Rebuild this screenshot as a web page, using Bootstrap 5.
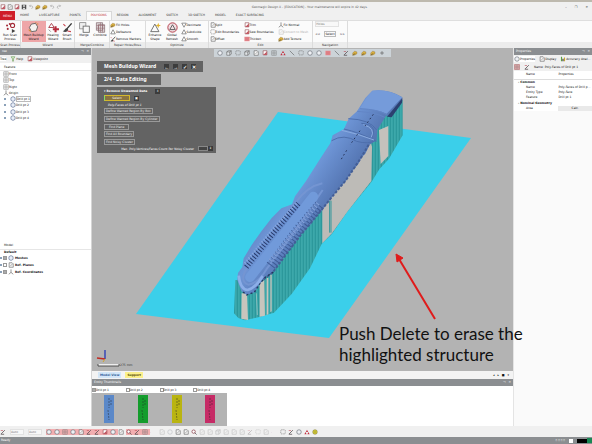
<!DOCTYPE html>
<html lang="en">
<head>
<meta charset="utf-8">
<meta name="viewport" content="width=device-width, initial-scale=1">
<title>Geomagic Design X</title>
<link href="https://cdn.jsdelivr.net/npm/bootstrap@5.3.0/dist/css/bootstrap.min.css" rel="stylesheet">
<style>
body{font-family:"DejaVu Sans",sans-serif;font-size:3px;line-height:4px;color:#111;background:#f0f0f0;height:100vh;min-height:400px;overflow:hidden}
button,input,select{font:inherit;color:inherit;padding:0;border:0;background:none;margin:0;border-radius:0}
a{color:inherit;text-decoration:none}
p,h1,h2,h3{margin:0;font-size:inherit;line-height:inherit}
svg{display:block;flex:none}
.ic{width:6px;height:6px}
.ic-lg{width:11px;height:11px}
.title-row{height:11px;border-top:2px solid #bdb9ae}
.title-row h1{font-weight:400;color:#555}
.side-start{flex:8 1 0}
.side-end{flex:7 1 0}
.quick-bar{gap:1px}
.menu-row{height:9px}
.menu-row a{color:#333}
.menu-btn{width:15px;height:9px;background:#cf1d28;color:#fff!important}
.menu-tabs a{padding:0 5px;height:9px;line-height:9px}
.menu-tabs a.current{background:#fbfbfb;border:1px solid #d8d8d8;border-bottom:0;color:#c2323a;line-height:7px;padding:0 4px}
.ribbon{height:28px;background:#fbfbfb;border-top:1px solid #dedede}
.rgroup{border-right:1px solid #dcdcdc}
.rgroup h2{height:6px;line-height:6px;background:#ececec;font-weight:400;text-align:center;color:#333;white-space:nowrap}
.rbig{height:21px;padding-top:1px;white-space:nowrap}
.rbig.on{background:#eea6a8}
.rsmall{height:6px;white-space:nowrap}
.panel-head{height:7px;line-height:7px;background:#8b8e91;color:#fff;padding:0 2px}
.left-pane{width:92px;background:#fff;border-right:1px solid #d5d5d5}
.above-model{flex:4 1 0}
.below-model{flex:5 1 0}
.right-pane{width:79px;background:#fafafa;border-left:1px solid #e4e4e4}
.ptabs{height:8px;background:#f0f0f0;overflow:hidden;white-space:nowrap}
.ptabs .current{background:#fff}
.feature-head{height:8px;border-bottom:1px solid #e6e6e6;padding-left:4px}
.tree-a{height:50px}
.tree-b{height:25px}
.tree-b .line{gap:1px}
.expander{width:2px;height:2px;background:#8aa0b8}
.boxed{border:1px solid #bbb;line-height:4px}
.stage{background:#b3b3b3;min-height:0}
.scene{position:absolute;left:0;top:0;width:421px;height:323px}
.view-tools{position:absolute;left:122px;top:1px;height:8px;background:#ccd3d8;padding:0 3px}
.wizard{position:absolute;left:5px;top:13px;width:119px;color:#fff}
.wiz-bar{background:#636363;height:11px;font-family:"Noto Sans","Open Sans",sans-serif;font-size:5px;line-height:11px;font-weight:700;color:#fff;padding-left:7px}
.wiz-wide{width:106px}
.wiz-short{width:64px;margin:2px 0}
.wiz-body{background:#636363;height:66px;padding:1px 3px}
.wiz-body button{border:1px solid #999;line-height:4px;padding:0 1px;color:#eee}
.wiz-body .pick{width:26px;border-color:#d4b72c;background:#8a7340;color:#fff;border-left-color:#7ee06a}
.wiz-body input{width:10px;height:5px;background:#444;border:1px solid #888}
.mini{width:5px;height:5px;background:#3c3c3c;color:#fff;line-height:4px;text-align:center}
.note{position:absolute;left:247px;top:275px;z-index:2;font-family:Lato,"Open Sans",sans-serif;font-size:17px;line-height:21px;color:#111;white-space:nowrap}
.view-tabs{height:8px;background:#f3f3f3;padding-left:6px}
.view-tabs a{height:6px;line-height:6px;padding:0 2px;font-weight:700}
.t-model{background:#d3e6f8;color:#2d5b96}
.t-support{background:#fbf08c;color:#554b00}
.thumbs{height:40px;background:#fff}
.thumb-list{width:135px}
.thumb-list label{height:7px;white-space:nowrap}
.thumb-list input,.cbox{appearance:none;width:4px;height:4px;border:1px solid #999;background:#fff;flex:none}
.thumb-list input:checked,.cbox:checked{background:#aaa}
.thumb-pic{background:#b3b3b3;height:33px;padding:2px 0 0 12px}
.bottom-tools{height:11px;background:#f0f0f0}
.bottom-tools select,.nav-pick{appearance:none;background:#f8f8f8;color:#777;border:1px solid #e2e2e2}
.bottom-tools select{width:14px}
.hot{background:#f2aeb0}
.dim{opacity:.35}
.status{height:7px;line-height:7px;background:#8b8e91;color:#fff;padding-left:1px}
.props{width:100%;height:40px;table-layout:fixed;color:#111;white-space:nowrap}
.props th,.props td{padding:0;height:5px;line-height:5px;overflow:hidden}
.props thead th{height:8px;border-bottom:1px solid #ddd;font-weight:400}
.props .ind{padding-left:12px;font-weight:400}
.calc{width:100%;background:#e9e9e9;line-height:5px}
</style>
<script src="https://cdn.jsdelivr.net/npm/bootstrap@5.3.0/dist/js/bootstrap.bundle.min.js"></script>
</head>
<body class="d-flex flex-column">
<svg width="0" height="0" class="position-absolute" aria-hidden="true"><defs>
<symbol id="ball" viewBox="0 0 16 16"><circle cx="8" cy="8" r="6" fill="#eef0f4" stroke="#60656e" stroke-width="1.6"/></symbol>
<symbol id="gem" viewBox="0 0 16 16"><path d="M8 1.500 13.500 4.500v7L8 14.500 2.500 11.500v-7Z" fill="#e8edf7" stroke="#5b6e93" stroke-width="1.700"/></symbol>
<symbol id="mesh" viewBox="0 0 16 16"><path d="M5 3 11 2l3 5-2 6-7 1-3-6Z" fill="#f5f2f0" stroke="#555" stroke-width="1.200"/><path d="M1 11l3 3M11 1l1-1M13 3h2" stroke="#d58a35" stroke-width="1.500"/></symbol>
<symbol id="scan" viewBox="0 0 16 16"><g fill="#a32b38"><circle cx="3" cy="5" r="1.500"/><circle cx="7" cy="3" r="1.500"/><circle cx="4" cy="10" r="1.500"/></g><circle cx="11" cy="5" r="3" fill="none" stroke="#a32b38" stroke-width="1.500"/><path d="M10 10l5 3-5 3Z" fill="#444"/></symbol>
<symbol id="heal" viewBox="0 0 16 16"><path d="M5 2 9 8H1Z" fill="none" stroke="#a83a46" stroke-width="1.300"/><path d="M11 6v9M7 10.500h9" stroke="#b52c3c" stroke-width="3"/><path d="M1 11l3 3" stroke="#666"/></symbol>
<symbol id="brush" viewBox="0 0 16 16"><path d="M14 2 7 10" stroke="#333" stroke-width="2"/><path d="M7 9c-3 0-3 4-6 4 3 3 8 1 8-2Z" fill="#444"/><path d="M2 3l3 3M8 13l5 1" stroke="#c8434e" stroke-width="1.500"/></symbol>
<symbol id="merge" viewBox="0 0 16 16"><rect x="1" y="1" width="9" height="9" fill="#eee" stroke="#777"/><rect x="6" y="6" width="9" height="9" fill="#f8f8f8" stroke="#666" stroke-width="1.200"/></symbol>
<symbol id="combine" viewBox="0 0 16 16"><path d="M2 1v11h9V1ZM5 4v11h9V4Z" fill="#dcd5d7" stroke="#80666c"/><path d="M5 4v8M8 1v14M11 4v11M2 5h12M2 9h12" stroke="#966a72" stroke-width=".8"/></symbol>
<symbol id="tri" viewBox="0 0 16 16"><path d="M8 2 14 13H2Z" fill="none" stroke="#555" stroke-width="1.600"/></symbol>
<symbol id="tridown" viewBox="0 0 16 16"><path d="M8 14 14 3H2Z" fill="none" stroke="#555" stroke-width="1.600"/></symbol>
<symbol id="funnel" viewBox="0 0 16 16"><path d="M3 2h10l-4 6v6H7V8Z" fill="#dff0d4" stroke="#5f9648" stroke-width="1.500"/></symbol>
<symbol id="shape" viewBox="0 0 16 16"><path d="M7 3 13 14H1Z" fill="none" stroke="#666" stroke-width="1.300"/><path d="m12 1 1 3 3 1-3 1-1 3-1-3-3-1 3-1Z" fill="#e2b32e"/></symbol>
<symbol id="remesh" viewBox="0 0 16 16"><circle cx="8" cy="8" r="6.800" fill="#f2dfe2" stroke="#b33e4c" stroke-width="1.400"/><path d="M8 4 12 11H4Z" fill="none" stroke="#555" stroke-width="1.300"/></symbol>
<symbol id="gold" viewBox="0 0 16 16"><path d="M2 14V8l5-5 6 2v5l-5 3Z" fill="#dcb13c" stroke="#87662a"/><path d="m3 14 5-5" stroke="#444" stroke-width="2"/></symbol>
<symbol id="page" viewBox="0 0 16 16"><path d="M3 2h8l3 3v9H3Z" fill="#f7f7f7" stroke="#555" stroke-width="1.500"/><path d="m6 11 6-6" stroke="#777" stroke-width="1.500"/></symbol>
<symbol id="cut" viewBox="0 0 16 16"><path d="M3 2h10v11H3Z" fill="#fff" stroke="#8a3941" stroke-width="1.500"/><path d="M3 13 13 4v9Z" fill="#c05862"/></symbol>
<symbol id="grid" viewBox="0 0 16 16"><path d="M2 2h12v12H2ZM8 2v12M2 8h12" fill="none" stroke="#777" stroke-width="1.300"/></symbol>
<symbol id="axis" viewBox="0 0 16 16"><path d="M8 1v8L2 14M8 9l6 5" fill="none" stroke="#555" stroke-width="1.600"/></symbol>
<symbol id="cube" viewBox="0 0 16 16"><path d="M2 5h8v9H2ZM2 5l4-3h8l-4 3M14 2v9l-4 3" fill="#e2e5e8" stroke="#555" stroke-width="1.400"/></symbol>
<symbol id="select" viewBox="0 0 16 16"><rect x="2" y="2" width="12" height="11" rx="2" fill="none" stroke="#666" stroke-width="1.400" stroke-dasharray="3 1.500"/></symbol>
<symbol id="line" viewBox="0 0 16 16"><path d="M2 2 14 14" stroke="#555" stroke-width="1.500"/></symbol>
<symbol id="redtri" viewBox="0 0 16 16"><path d="M8 2 11 8H5ZM4 8 7 14H1ZM12 8l3 6H9Z" fill="#c33242"/></symbol>
<symbol id="pen" viewBox="0 0 16 16"><path d="M3 13 13 3M2 14h9" stroke="#51484b" stroke-width="2"/><path d="M2 4h6" stroke="#b54450" stroke-width="1.500"/></symbol>
<symbol id="redbox" viewBox="0 0 16 16"><rect x="1" y="2" width="14" height="12" fill="#e78d92"/><path d="M3 5h10M3 8h10M3 11h10" stroke="#c65b64"/></symbol>
<symbol id="lens" viewBox="0 0 16 16"><circle cx="7" cy="7" r="4.500" fill="#fff" stroke="#8e444d" stroke-width="2"/><path d="m10 10 5 5" stroke="#555" stroke-width="2"/></symbol>
<symbol id="sun" viewBox="0 0 16 16"><circle cx="8" cy="8" r="6" fill="#e3dd3d" stroke="#776f25" stroke-width="1.500"/><path d="M8 4v8M4 8h8" stroke="#776f25"/></symbol>
<symbol id="save" viewBox="0 0 16 16"><path d="M2 2h12v12H2Z" fill="#444"/><path d="M5 3h6v4H5ZM5 10h6v4H5Z" fill="#ddd"/></symbol>
<symbol id="undo" viewBox="0 0 16 16"><path d="M4 5h5c5 0 5 7 0 7M7 2 4 5l3 3" fill="none" stroke="#999" stroke-width="1.500"/></symbol>
<symbol id="redo" viewBox="0 0 16 16"><path d="M12 5H7c-5 0-5 7 0 7M9 2l3 3-3 3" fill="none" stroke="#999" stroke-width="1.500"/></symbol>
<symbol id="plus" viewBox="0 0 16 16"><path d="M8 3v10M3 8h10" stroke="#555" stroke-width="1.600"/></symbol>
<symbol id="bars" viewBox="0 0 16 16"><path d="M4 2v12" stroke="#5ca044" stroke-width="3"/><path d="M8 7v7" stroke="#333" stroke-width="3"/><path d="M12 4v10" stroke="#c6a52e" stroke-width="3"/></symbol>
</defs></svg>

<header>
  <div class="title-row d-flex align-items-center">
    <div class="side-start quick-bar d-flex align-items-center" id="quick" data-icons="cut page cut save undo gold gold undo redo"></div>
    <h1>Geomagic Design X - [EDUCATION] - Your maintenance will expire in 42 days.</h1>
    <div class="side-end d-flex justify-content-end gap-2 pe-1"><button aria-label="Minimize">–</button><button aria-label="Restore">❐</button><button aria-label="Close">✕</button></div>
  </div>
  <nav class="menu-row d-flex">
    <a href="#" class="menu-btn d-flex align-items-center justify-content-center">MENU</a>
    <div class="menu-tabs d-flex" id="menus"></div>
  </nav>
  <div class="ribbon d-flex" id="ribbon"></div>
</header>

<main class="d-flex flex-fill" style="min-height:0">
  <aside class="left-pane d-flex flex-column flex-shrink-0">
    <div class="panel-head d-flex justify-content-between"><span>ree</span><span>⊣ &nbsp; ✕</span></div>
    <div class="ptabs d-flex align-items-center gap-1">
      <a href="#" class="current d-flex align-items-center">Tree</a>
      <a href="#" class="d-flex align-items-center"><svg class="ic"><use href="#funnel"/></svg>Help</a>
      <a href="#" class="d-flex align-items-center"><svg class="ic"><use href="#cut"/></svg>Viewpoint</a>
    </div>
    <div class="feature-head d-flex align-items-center">Feature</div>
    <div class="tree-a d-flex flex-column" id="features"></div>
    <div class="above-model"></div>
    <div class="feature-head d-flex align-items-center">Model</div>
    <div class="tree-b d-flex flex-column fw-bold" id="models"></div>
    <div class="below-model"></div>
  </aside>

  <section class="d-flex flex-column flex-fill" style="min-width:0">
    <div class="stage position-relative flex-fill">
      <svg class="scene" viewBox="92 48 421 323" role="img" aria-label="Scanned part on a support plane">
        <defs>
          <pattern id="ribs" width="9" height="20" patternUnits="userSpaceOnUse"><path d="M0 0h9v20H0Z" fill="#35a3a6"/><path d="M1 0v20" stroke="#1e878c" stroke-width="1.500"/><path d="M5 0v20" stroke="#4fb5b5" stroke-width="1"/></pattern>
          <linearGradient id="skin" x1="200" y1="260" x2="360" y2="370" gradientUnits="userSpaceOnUse"><stop offset="0" stop-color="#5778b5"/><stop offset=".5" stop-color="#6e95d6"/><stop offset="1" stop-color="#5576b3"/></linearGradient>
        </defs>
        <path d="M278 112 471 138 329 338 136 314Z" fill="#3bcfea"/>
        <g transform="translate(210 80) scale(.3333)">
          <path d="M76 600 72 700 85 714 105 721 148 711 192 698 245 642 300 565 335 492 366 462 412 395 485 305 508 268 537 236 578 166 578 60 520 100 335 380 150 600Z" fill="url(#ribs)"/>
          <path d="M337 385 363 350 480 180 486 200 484 303 412 395 366 460 337 490Z" fill="#bdbbb7"/>
          <path d="M359 362v96M363 362v96" stroke="#35989b" stroke-width="3"/>
          <path d="M507 150 535 138 535 228 512 252Z" fill="#c4c1bc"/>
          <path d="M95 640h16l3 80-20-4ZM149 610l14-10 2 107-16 3ZM170 595l5-2v110l-5 2ZM181 585l4-3v112l-4 3Z" fill="#c8c5bd"/>
          <path d="M139 640l3 65" stroke="#8ac0be" stroke-width="3"/>
          <path d="M487 32Q535 26 577 52L577 62 543 108 528 107 502 150 500 180 479 194 466 221 455 232 445 252 425 275 406 305 387 325 355 366 335 393 321 407 300 436 273 463 252 492 230 521 208 550 187 578 165 592 149 613 134 637 110 645 94 633 82 600 84 579 97 561 101 535 125 495 153 455 185 414 214 385 246 373 255 349 288 303 332 234 361 190 368 166 402 147 416 116 441 94 466 54Z" fill="url(#skin)"/>
          <path d="M487 32Q535 26 577 52L530 101Q500 88 450 85L470 52Z" fill="#759bda"/>
          <path d="M577 55 576 68 545 112 531 110 541 98Z" fill="#2c3f70"/>
          <path d="M450 86Q505 88 530 104M441 94Q500 98 524 112" fill="none" stroke="#6286c6" stroke-width="3"/>
          <path d="M415 116Q480 118 500 150M402 147Q445 156 500 184M365 182Q402 160 440 184 474 194 499 181M454 130Q508 134 483 178" fill="none" stroke="#4d6eac" stroke-width="3"/>
          <path d="M395 151Q440 160 492 180M460 134Q498 145 484 172" fill="none" stroke="#8bace0" stroke-width="3"/>
          <path d="M490 103 465 138M450 152 420 195M410 211 393 239" fill="none" stroke="#27355b" stroke-width="3" stroke-dasharray="5 8"/>
          <path d="M337 310Q290 320 255 370 170 480 113 560 85 604 115 614 145 610 170 567 260 450 338 330" fill="none" stroke="#7495d2" stroke-width="6"/>
          <path d="M310 350Q200 490 120 592" fill="none" stroke="#719ada" stroke-width="29" stroke-linecap="round"/>
          <path d="M265 371 192 457 106 565" fill="none" stroke="#273b6d" stroke-width="16" stroke-dasharray="3 6"/>
          <path d="M260 371 185 451 103 552" fill="none" stroke="#8ba9df" stroke-width="7" stroke-dasharray="3 6"/>
          <path d="M328 375 266 448 181 559" fill="none" stroke="#3e5b95" stroke-width="31" stroke-dasharray="3 7"/>
          <path d="M324 370 250 460 178 546" fill="none" stroke="#7f9ed7" stroke-width="13" stroke-dasharray="4 6"/>
          <path d="M476 194 452 235 409 299 356 363 323 404 273 464 230 521 188 578 152 604" fill="none" stroke="#435e96" stroke-width="6" stroke-dasharray="8 5"/>
          <path d="M190 576 166 592 150 610 133 637 110 645 94 632" fill="none" stroke="#23365f" stroke-width="4" stroke-dasharray="6 7"/>
          <path d="M86 587Q91 629 113 630 139 622 158 588" fill="none" stroke="#8caee8" stroke-width="8"/>
        </g>
        <path d="M435 319 399 259" stroke="#e01b1b" stroke-width="2"/><path d="M396 254 397 262 403 258Z" fill="#e01b1b" stroke="#e01b1b"/>
        <path d="M105 359v-9" stroke="#2638b8" stroke-width="1.300"/><path d="M105 359 97 358" stroke="#c22a22" stroke-width="1.300"/><path d="M105 359l-2 3" stroke="#d1a52b"/>
        <path d="M98 364v2h21v-2" fill="#eee" stroke="#333" stroke-width=".8"/>
        <text x="120" y="366" font-size="3" fill="#333">275 mm</text>
      </svg>
      <div class="view-tools d-flex align-items-center" id="viewtools" data-icons="ball cube select cube page cut grid redtri line select ball ball redbox line pen gold gold gold plus"></div>
      <div class="wizard">
        <div class="wiz-bar wiz-wide d-flex align-items-center"><span class="me-2">Mesh Buildup Wizard</span><button class="mini me-1" aria-label="Back">←</button><button class="mini me-1" aria-label="Next">→</button><button class="mini me-1" aria-label="Apply">✓</button><button class="mini" aria-label="Cancel">✕</button></div>
        <div class="wiz-bar wiz-short">2/4 - Data Editing</div>
        <div class="wiz-body d-flex flex-column" id="wiz"></div>
      </div>
      <p class="note">Push Delete to erase the<br>highlighted structure</p>
    </div>
    <nav class="view-tabs d-flex align-items-center gap-1"><a href="#" class="t-model">Model View</a><a href="#" class="t-support">Support</a><span class="ms-auto pe-1">◂ &nbsp; ▸ &nbsp; ■ &nbsp; ▾</span></nav>
    <div class="panel-head d-flex justify-content-between"><span>Entity Thumbnails</span><span>⊣ &nbsp; ✕</span></div>
    <div class="thumbs"><div class="thumb-list row row-cols-4 g-0" id="thumbs"></div></div>
  </section>

  <aside class="right-pane flex-shrink-0">
    <div class="panel-head d-flex justify-content-between"><span>Properties</span><span>⊣ &nbsp; ✕</span></div>
    <div class="ptabs d-flex align-items-center">
      <a href="#" class="current d-flex align-items-center me-1"><svg class="ic"><use href="#ball"/></svg>Properties</a>
      <a href="#" class="d-flex align-items-center me-1"><svg class="ic"><use href="#page"/></svg>Display</a>
      <a href="#" class="d-flex align-items-center"><svg class="ic"><use href="#bars"/></svg>Accuracy Anal...</a>
    </div>
    <div class="ptabs d-flex align-items-center gap-1"><svg class="ic hot"><use href="#grid"/></svg><svg class="ic"><use href="#pen"/></svg><span>Name: Poly-Faces of Drill pt 1</span></div>
    <table class="props bg-white">
      <thead><tr><th class="ind" style="width:57%">Name</th><th>Properties</th></tr></thead>
      <tbody>
        <tr><th colspan="2" class="ps-1">- Common</th></tr>
        <tr><th class="ind">Name</th><td>Poly-Faces of Drill p...</td></tr>
        <tr><th class="ind">Entity Type</th><td>Poly-Face</td></tr>
        <tr><th class="ind">Feature</th><td>Drill pt 1</td></tr>
        <tr><th colspan="2" class="ps-1">- Nominal Geometry</th></tr>
        <tr><th class="ind">Area</th><td><button class="calc">Calc.</button></td></tr>
      </tbody>
    </table>
  </aside>
</main>

<footer>
  <div class="bottom-tools d-flex align-items-center" id="bottom">
    <svg class="ic me-1"><use href="#pen"/></svg>
    <select aria-label="Type filter" class="me-1"><option>Auto</option></select>
    <select aria-label="Mesh filter" class="me-1"><option>Auto</option></select>
  </div>
  <div class="status d-flex align-items-center"><span>Ready</span><span class="ms-auto me-1">▯ ▯ ▯ ▯</span><span class="bg-white" style="width:4px;height:4px"></span><span class="bg-black ms-1" style="width:10px;height:4px"></span><span class="bg-success" style="width:5px;height:5px"></span></div>
</footer>

<script>
const $ = id => document.getElementById(id);
const ic = (n, c = 'ic') => `<svg class="${c}" aria-hidden="true"><use href="#${n}"/></svg>`;

$('menus').innerHTML = ['HOME','LIVECAPTURE','POINTS','POLYGONS','REGION','ALIGNMENT','SKETCH','3D SKETCH','MODEL','EXACT SURFACING']
  .map(t => `<a href="#"${t === 'POLYGONS' ? ' class="current"' : ''}>${t}</a>`).join('');
$('quick').innerHTML = $('quick').dataset.icons.split(' ').map(n => ic(n)).join('');
$('viewtools').innerHTML = $('viewtools').dataset.icons.split(' ')
  .map(n => `<button style="width:9px" aria-label="${n}">${ic(n)}</button>`).join('');

const big = (n, t, w, on) => `<button class="rbig d-flex flex-column align-items-center${on ? ' on' : ''}" style="width:${w}px">${ic(n, 'ic-lg')}<span>${t}</span></button>`;
const col = (w, list) => `<div class="d-flex flex-column justify-content-around" style="width:${w}px">` +
  list.map(([n, t, d]) => `<button class="rsmall d-flex align-items-center${d ? ' dim' : ''}">${ic(n)}<span>${t}</span></button>`).join('') + '</div>';
const navi = `<div class="p-1 pt-0"><select class="nav-pick d-block mb-1" style="width:24px" aria-label="Navigation target"><option>Holes</option></select><div class="d-flex gap-1"><button>&lt;&lt;</button><button class="boxed">Select</button><button>&gt;&gt;</button></div></div>`;
$('ribbon').innerHTML = [
  [21, 'Scan Process', big('scan', 'Run Scan<br>Process', 17)],
  [54, 'Wizard', big('mesh', 'Mesh Buildup<br>Wizard', 24, 1) + big('heal', 'Healing<br>Wizard', 15) + big('brush', 'Smart<br>Brush', 13)],
  [35, 'Merge/Combine', big('merge', 'Merge', 16) + big('combine', 'Combine', 16)],
  [36, 'Repair Holes/Boss', col(35, [['gold','Fill Holes'],['tri','Defeature'],['brush','Remove Markers']])],
  [63, 'Optimize', big('shape', 'Enhance<br>Shape', 17) + big('remesh', 'Global<br>Remesh', 17) + col(27, [['tridown','Decimate'],['tri','Subdivide'],['tri','Smooth']])],
  [104, 'Edit', col(34, [['page','Split'],['select','Edit Boundaries'],['page','Offset']]) + col(34, [['cut','Trim'],['cut','Sew Boundaries'],['redbox','Thicken']]) + col(34, [['axis','Fix Normal'],['page','Convert to Mesh',1],['gold','Add Texture']])],
  [35, 'Navigation', navi]
].map(([w, t, h]) => `<section class="rgroup d-flex flex-column flex-shrink-0" style="width:${w}px"><div class="d-flex justify-content-center flex-fill">${h}</div><h2>${t}</h2></section>`).join('')
 + '<section class="rgroup d-flex flex-column flex-fill border-0"><div class="flex-fill"></div><h2></h2></section>';

$('features').innerHTML = ['Front','Top','Right','Origin','Drill pt 1','Drill pt 2','Drill pt 3','Drill pt 4'].map((t, i) =>
  `<div class="d-flex align-items-center flex-fill" style="padding-left:${i > 3 ? 4 : 3}px">${i > 3 ? '<span class="expander me-1"></span>' : ''}${ic(i < 3 ? 'grid' : i === 3 ? 'axis' : 'gem')}<span${i === 4 ? ' class="boxed"' : ''}>${t}</span></div>`).join('');
$('models').innerHTML = '<div class="d-flex align-items-center flex-fill ps-1">Default</div>' + [['gem','Meshes',1],['page','Ref. Planes',0],['axis','Ref. Coordinates',1]]
  .map(([n, t, on]) => `<div class="line d-flex align-items-center flex-fill"><span class="expander"></span><input type="checkbox" class="cbox" aria-label="${t}"${on ? ' checked' : ''}>${ic(n)}<span>${t}</span></div>`).join('');

$('wiz').innerHTML = [
  '<b class="ms-1">▾ Remove Unwanted Data</b><span class="mini ms-2">↥</span>',
  '<button class="pick ms-1">Select</button><span class="mini ms-1">▣</span>',
  '<i class="ms-1 ps-1">Poly-Faces of Drill pt 1</i>',
  '<button class="ms-1">Define Wanted Region By Box</button>',
  '<button class="ms-1">Define Wanted Region By Cylinder</button>',
  '<button class="ms-1 px-1">Find Plane</button>',
  '<button class="ms-1">Find All Boundary</button>',
  '<button class="ms-1">Find Noisy Cluster</button>',
  '<label class="ms-auto me-1" for="cnt">Max. Poly-Vertices/Faces Count Per Noisy Cluster</label><input id="cnt"><span class="mini">↕</span>'
].map(h => `<div class="d-flex align-items-center flex-fill text-nowrap">${h}</div>`).join('');

$('thumbs').innerHTML = ['#5b88c8','#149c2c','#b9b411','#c62b66'].map((c, i) =>
  `<div class="col"><label class="d-flex align-items-center"><input type="checkbox"${i ? '' : ' checked'}>Drill pt ${i + 1}</label><div class="thumb-pic"><svg width="10" height="28"><path d="M0 0h10v28H0Z" fill="${c}"/><path d="M5 3v10M4 15l1 10M7 5v6" stroke="#222" stroke-opacity=".45" stroke-width="1" stroke-dasharray="2 1"/></svg></div></div>`).join('');

const set = (list, cls) => list.split(' ').map(n => `<button class="${cls}" style="width:8px" aria-label="${n}">${ic(n)}</button>`).join('');
$('bottom').insertAdjacentHTML('beforeend',
  set('ball ball grid ball page pen pen cut ball', 'hot') + set('page', '') + set('lens pen grid', 'hot') + '<span class="me-2">.</span>' +
  set('page ball', 'dim') + set('page page lens', '') + set('page page cube page page page pen select page', 'dim') + '<span class="me-2">.</span>' +
  set('select pen ball redtri sun', ''));
</script>
</body>
</html>
